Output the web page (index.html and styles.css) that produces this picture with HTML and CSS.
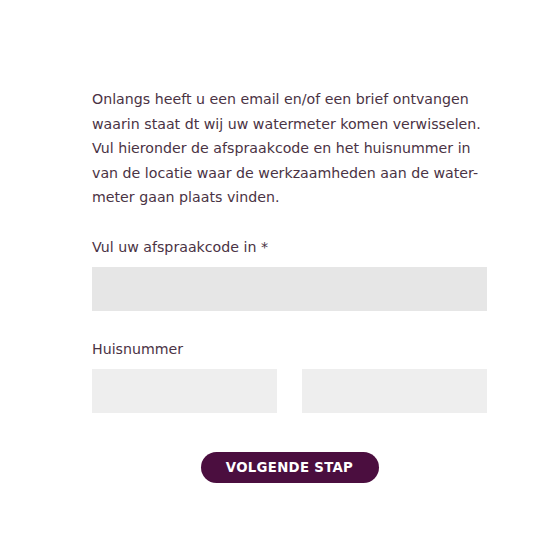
FILE: index.html
```html
<!DOCTYPE html>
<html lang="nl">
<head>
<meta charset="UTF-8" />
<meta name="viewport" content="width=device-width, initial-scale=1" />
<title>Afspraak wijzigen</title>
<link rel="stylesheet" href="styles.css">
</head>
<body>

<main class="appointment">
  <p class="intro">
    Onlangs heeft u een email en/of een brief ontvangen<br>
    waarin staat dt wij uw watermeter komen verwisselen.<br>
    Vul hieronder de afspraakcode en het huisnummer in<br>
    van de locatie waar de werkzaamheden aan de water-<br>
    meter gaan plaats vinden.
  </p>

  <form class="code-form">
    <div class="field">
      <label for="code">Vul uw afspraakcode in *</label>
      <input id="code" class="input input-code" type="text" />
    </div>

    <div class="field">
      <label for="nr">Huisnummer</label>
      <div class="house-row">
        <input id="nr" class="input" type="text" />
        <input class="input" type="text" />
      </div>
    </div>

    <div class="actions">
      <button type="button" class="next-btn">Volgende stap</button>
    </div>
  </form>
</main>

</body>
</html>
```

FILE: styles.css
```css
body {
  margin: 0;
  background: #fff;
  font-family: "DejaVu Sans", sans-serif;
  color: #4a3344;
}

.appointment {
  width: 395px;
  margin: 0 0 0 92px;
  padding-top: 87px;
}

.intro {
  margin: 0;
  font-size: 14.2px;
  line-height: 24.5px;
  white-space: nowrap;
}

.code-form {
  margin-top: 27px;
}

.field {
  margin-bottom: 28px;
}

.field label {
  display: block;
  font-size: 14.2px;
  line-height: 20px;
  margin-bottom: 10px;
}

.input {
  display: block;
  box-sizing: border-box;
  width: 100%;
  min-width: 0;
  height: 44px;
  border: none;
  background: #eeeeee;
  padding: 0 12px;
  font: inherit;
}

.input-code {
  background: #e6e6e6;
}

.house-row {
  display: flex;
  gap: 25px;
}

.house-row .input {
  flex: 1 1 0;
  width: auto;
}

.actions {
  text-align: center;
  padding-top: 11px;
}

.next-btn {
  background: #4b0e3f;
  color: #fff;
  border: none;
  border-radius: 16px;
  height: 31px;
  width: 178px;
  font-family: "DejaVu Sans", sans-serif;
  font-weight: bold;
  font-size: 13.3px;
  letter-spacing: 0.3px;
  text-transform: uppercase;
  cursor: pointer;
}
```
